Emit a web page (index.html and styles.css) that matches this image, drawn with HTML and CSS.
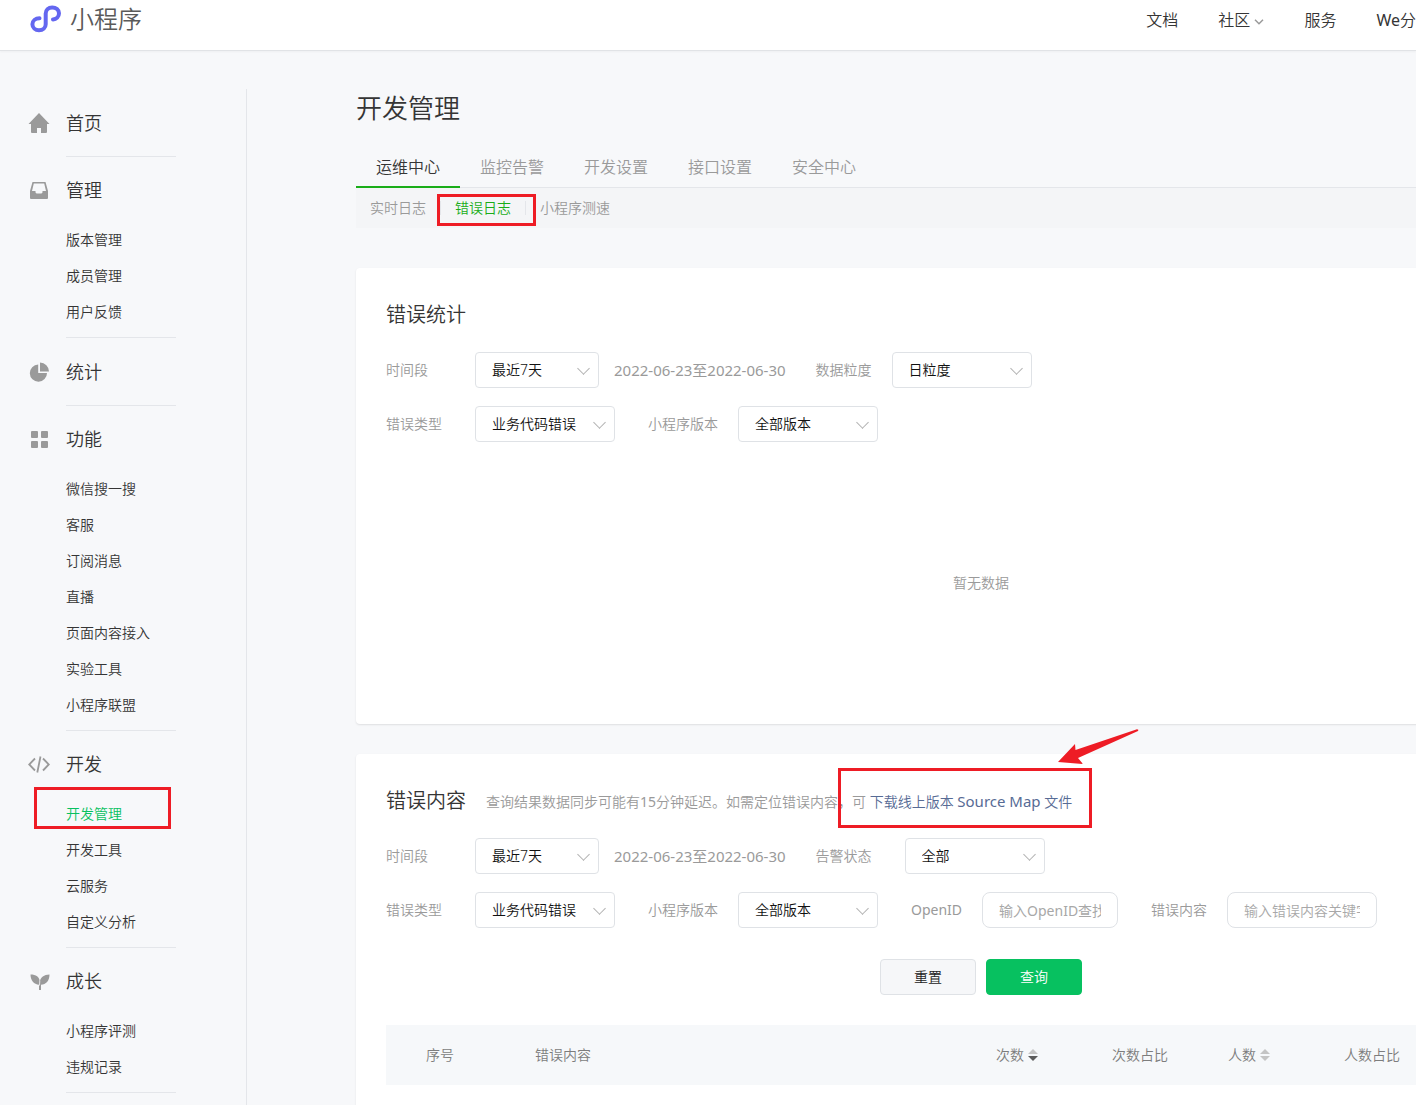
FILE: index.html
```html
<!DOCTYPE html>
<html lang="zh-CN">
<head>
<meta charset="utf-8">
<meta name="viewport" content="width=device-width, initial-scale=1">
<title>小程序</title>
<link rel="stylesheet" href="styles.css">
</head>
<body>
<header class="topbar">
  <a class="brand" href="#">
    <svg class="brand-mark" viewBox="0 0 32 30" width="32" height="30" aria-hidden="true"><path d="M9.500 14.200C5.500 14.200 2.400 16.800 2.400 20.300C2.400 23.700 5.300 26.200 9 26.200C13 26.200 15.700 23.700 15.700 20.300V9.500C15.700 6.100 18.400 3.400 22.200 3.400C26 3.400 29 6 29 9.300C29 12.700 26.300 15.200 23 15.400" fill="none" stroke="#6467f0" stroke-width="4" stroke-linecap="round"/></svg>
    <span class="brand-name">小程序</span>
  </a>
  <nav class="topnav">
    <a href="#">文档</a>
    <a href="#">社区<svg class="nav-arrow" viewBox="0 0 10 6" width="10" height="6" aria-hidden="true"><path d="M1 .8l4 4 4-4" fill="none" stroke="#9a9a9a" stroke-width="1.500"/></svg></a>
    <a href="#">服务</a>
    <a href="#"><span class="latin">We</span>分</a>
  </nav>
</header>

<div class="layout">
  <nav class="sidebar">
    <section class="menu-group">
      <a class="menu-title" href="#"><svg viewBox="0 0 22 22" width="22" height="22"><path d="M11 0l10.500 11H19v8a1 1 0 0 1-1 1h-5v-5H9v5H4a1 1 0 0 1-1-1v-8H.5z" fill="#9a9a9a"/></svg>首页</a>
    </section>
    <section class="menu-group has-items">
      <a class="menu-title" href="#"><svg viewBox="0 0 22 22" width="22" height="22"><path d="M4.500 2h13L20 11v7a1 1 0 0 1-1 1H3a1 1 0 0 1-1-1v-7zM5.800 3.500L4 11h3.500v1.500l1 1h5l1-1V11H18l-1.800-7.500z" fill="#9a9a9a" fill-rule="evenodd"/></svg>管理</a>
      <ul>
        <li><a href="#">版本管理</a></li>
        <li><a href="#">成员管理</a></li>
        <li><a href="#">用户反馈</a></li>
      </ul>
    </section>
    <section class="menu-group">
      <a class="menu-title" href="#"><svg viewBox="0 0 22 22" width="22" height="22"><path d="M10.200 2.500v8.500H19A8.600 8.600 0 1 1 10.200 2.500zM12 .5a9 9 0 0 1 9 9h-9z" fill="#9a9a9a"/></svg>统计</a>
    </section>
    <section class="menu-group has-items">
      <a class="menu-title" href="#"><svg viewBox="0 0 22 22" width="22" height="22"><g fill="#9a9a9a"><rect x="3" y="2" width="7" height="7" rx="1"/><rect x="13" y="2" width="7" height="7" rx="1"/><rect x="3" y="12" width="7" height="7" rx="1"/><rect x="13" y="12" width="7" height="7" rx="1"/></g></svg>功能</a>
      <ul>
        <li><a href="#">微信搜一搜</a></li>
        <li><a href="#">客服</a></li>
        <li><a href="#">订阅消息</a></li>
        <li><a href="#">直播</a></li>
        <li><a href="#">页面内容接入</a></li>
        <li><a href="#">实验工具</a></li>
        <li><a href="#">小程序联盟</a></li>
      </ul>
    </section>
    <section class="menu-group has-items">
      <a class="menu-title" href="#"><svg viewBox="0 0 22 22" width="22" height="22"><path d="M7 4.500L1.200 10.500 7 16.500M15 4.500l5.800 6-5.800 6M12.500 2.500l-3.200 16" fill="none" stroke="#9a9a9a" stroke-width="1.800"/></svg>开发</a>
      <ul>
        <li><a class="current" href="#">开发管理</a><span class="mark mark-menu"></span></li>
        <li><a href="#">开发工具</a></li>
        <li><a href="#">云服务</a></li>
        <li><a href="#">自定义分析</a></li>
      </ul>
    </section>
    <section class="menu-group has-items">
      <a class="menu-title" href="#"><svg viewBox="0 0 22 22" width="22" height="22"><path d="M2.500 3.500C8 3.500 11.500 6 11.800 10.500 12.500 6.500 16 3.500 21.500 3.500 21.500 10 18 13.500 13 13.800V19h-2v-5.300C6 13.300 2.500 9.500 2.500 3.500z" fill="#9a9a9a"/><path d="M11.800 9.500L11.500 14.500" stroke="#f7f8fa" stroke-width=".8"/></svg>成长</a>
      <ul>
        <li><a href="#">小程序评测</a></li>
        <li><a href="#">违规记录</a></li>
      </ul>
    </section>
  </nav>

  <main class="main">
    <div class="content">
      <h1>开发管理</h1>
      <nav class="tabs">
        <a class="active" href="#">运维中心</a>
        <a href="#">监控告警</a>
        <a href="#">开发设置</a>
        <a href="#">接口设置</a>
        <a href="#">安全中心</a>
      </nav>
      <nav class="subtabs">
        <a href="#">实时日志</a>
        <a class="active" href="#">错误日志<span class="mark mark-tab"></span></a>
        <a href="#">小程序测速</a>
      </nav>

      <section class="card stats">
        <div class="card-head"><h2>错误统计</h2></div>
        <div class="filters">
          <label class="lead" for="s-range">时间段</label>
          <span class="select short"><select id="s-range"><option>最近7天</option></select></span>
          <span class="dates">2022-06-23至2022-06-30</span>
          <label for="s-grain">数据粒度</label>
          <span class="select"><select id="s-grain"><option>日粒度</option></select></span>
        </div>
        <div class="filters">
          <label class="lead" for="s-type">错误类型</label>
          <span class="select"><select id="s-type"><option>业务代码错误</option></select></span>
          <label for="s-version">小程序版本</label>
          <span class="select"><select id="s-version"><option>全部版本</option></select></span>
        </div>
        <p class="empty">暂无数据</p>
      </section>

      <section class="card errors">
        <div class="card-head">
          <h2>错误内容</h2>
          <p class="hint">查询结果数据同步可能有<span class="latin">15</span>分钟延迟。如需定位错误内容，可 <a class="download" href="#">下载线上版本 <span class="latin">Source Map</span> 文件<span class="mark mark-link"></span><svg class="pointer" viewBox="0 0 82 38" width="82" height="38" aria-hidden="true"><path d="M1 34L18 16 18.500 22 80 1.200Q82 1.200 81 3L21 30 26 36z" fill="#ee1c25"/></svg></a></p>
        </div>
        <div class="filters">
          <label class="lead" for="e-range">时间段</label>
          <span class="select short"><select id="e-range"><option>最近7天</option></select></span>
          <span class="dates">2022-06-23至2022-06-30</span>
          <label class="status" for="e-status">告警状态</label>
          <span class="select"><select id="e-status"><option>全部</option></select></span>
        </div>
        <div class="filters">
          <label class="lead" for="e-type">错误类型</label>
          <span class="select"><select id="e-type"><option>业务代码错误</option></select></span>
          <label for="e-version">小程序版本</label>
          <span class="select"><select id="e-version"><option>全部版本</option></select></span>
          <label class="latin" for="e-openid">OpenID</label>
          <input id="e-openid" class="field latin" type="text" placeholder="输入OpenID查找">
          <label for="e-text">错误内容</label>
          <input id="e-text" class="field wide" type="text" placeholder="输入错误内容关键字">
        </div>
        <div class="actions">
          <button class="btn" type="button">重置</button>
          <button class="btn primary" type="button">查询</button>
        </div>
        <table>
          <colgroup><col class="c-index"><col class="c-text"><col class="c-num"><col class="c-num"><col class="c-num"><col></colgroup>
          <thead>
            <tr>
              <th>序号</th>
              <th>错误内容</th>
              <th>次数<svg class="sort" viewBox="0 0 10 12" width="10" height="12" aria-hidden="true"><path d="M0 5l5-5 5 5z" fill="#c4c4c4"/><path d="M0 7l5 5 5-5z" fill="#5c5c5c"/></svg></th>
              <th>次数占比</th>
              <th>人数<svg class="sort" viewBox="0 0 10 12" width="10" height="12" aria-hidden="true"><path d="M0 5l5-5 5 5z" fill="#c4c4c4"/><path d="M0 7l5 5 5-5z" fill="#c4c4c4"/></svg></th>
              <th>人数占比</th>
            </tr>
          </thead>
        </table>
      </section>
    </div>
  </main>
</div>
</body>
</html>
```
FILE: styles.css
```css
* { box-sizing: border-box; }

body {
  margin: 0;
  min-height: 100vh;
  display: flex;
  flex-direction: column;
  background: #f7f8fa;
  color: #353535;
  font: 350 14px/20px "Noto Sans", "Noto Sans CJK SC", sans-serif;
  overflow-x: hidden;
}

h1, h2, p, ul { margin: 0; padding: 0; font-weight: inherit; }
ul { list-style: none; }
a { color: inherit; text-decoration: none; }
svg { flex: none; }

/* Top bar */
.topbar {
  display: flex;
  justify-content: space-between;
  height: 51px;
  padding: 0 0 12px 30px;
  background: #fff;
  border-bottom: 1px solid #e1e3e6;
  box-shadow: 0 1px 2px rgba(0, 0, 0, .04);
}
.brand { display: flex; align-items: center; gap: 8px; color: #5a5a5a; font-size: 24px; line-height: 38px; }
.topnav { display: flex; gap: 40px; font-size: 16px; line-height: 40px; white-space: nowrap; }
.nav-arrow { margin: 0 0 1px 4px; }

/* Page frame */
.layout { flex: 1; display: flex; padding-top: 38px; }

.sidebar { flex: none; width: 247px; padding: 0 70px 0 28px; border-right: 1px solid #e4e6ea; }
.menu-group { position: relative; padding: 18px 0 17px; }
.menu-group::after {
  content: "";
  position: absolute;
  left: 38px;
  right: 0;
  bottom: 0;
  border-bottom: 1px solid #e4e6ea;
}
.menu-group.has-items { padding: 17px 0 8px; }
.menu-title { display: flex; align-items: center; gap: 16px; font-size: 18px; line-height: 33px; }
.menu-group ul { margin-top: 15px; padding-left: 38px; }
.menu-group li { position: relative; line-height: 36px; }
.menu-group .current { color: #07c160; }

.main { flex: 1; min-width: 0; padding-left: 109px; overflow: hidden; display: flex; }
.content { flex: 1; min-width: 1250px; display: flex; flex-direction: column; }

h1 { font-size: 26px; line-height: 38px; margin-bottom: 20px; }

.tabs { display: flex; border-bottom: 1px solid #e4e6ea; font-size: 16px; line-height: 40px; color: #9a9a9a; }
.tabs a { padding: 0 20px; height: 41px; margin-bottom: -1px; }
.tabs .active { color: #353535; border-bottom: 2px solid #1aad19; }

.subtabs { display: flex; align-items: center; height: 40px; background: #f4f5f7; color: #9a9a9a; }
.subtabs a { position: relative; padding: 0 14px; line-height: 14px; }
.subtabs a + a { border-left: 1px solid #e4e6ea; }
.subtabs .active { color: #1aad19; }

/* Cards */
.card { background: #fff; border-radius: 4px; padding: 30px; box-shadow: 0 1px 2px rgba(0, 0, 0, .1); }
.stats { margin-top: 40px; padding-bottom: 131px; }
.errors { flex: 1; margin-top: 30px; padding-bottom: 20px; border-radius: 4px 4px 0 0; }
.card-head { display: flex; align-items: center; gap: 20px; height: 34px; margin: 0 0 20px; }
h2 { font-size: 20px; line-height: 32px; }
.hint { color: #9a9a9a; }
.download { position: relative; color: #576b95; }

.latin, .dates { font-weight: 400; }

.filters { display: flex; align-items: center; height: 36px; margin-bottom: 18px; color: #9a9a9a; white-space: nowrap; }
.filters label { margin: 0 20px 0 33px; }
.filters .lead { width: 69px; margin-left: 0; }
.filters .dates + label { margin-left: 30px; }
.filters .status { margin-right: 33px; }
.dates { margin-left: 15px; }
.dates, .download .latin { font-size: 15px; }

.select { position: relative; width: 140px; }
.select.short { width: 124px; }
.select::after {
  content: "";
  position: absolute;
  right: 11px;
  top: 12px;
  width: 8px;
  height: 8px;
  border: solid #b2b2b2;
  border-width: 0 1px 1px 0;
  transform: rotate(45deg);
  pointer-events: none;
}
select, .btn { font: inherit; }
.field { font-family: inherit; font-size: inherit; }
select, .field, .btn { height: 36px; border: 1px solid #dfe2e6; border-radius: 4px; }
select { display: block; width: 100%; padding: 0 16px; appearance: none; background: #fff; color: #111; }
.field { width: 136px; padding: 0 16px; border-radius: 8px; background: #fff; }
.field.wide { width: 150px; font-weight: inherit; }
.field::placeholder { color: #a8a8a8; }

.empty { margin-top: 131px; text-align: center; color: #9a9a9a; }

.actions { display: flex; justify-content: center; gap: 10px; margin: 31px 0 30px; }
.btn { width: 96px; background: #f6f7f9; color: #222; }
.btn.primary { background: #07c160; border-color: #07c160; color: #fff; }

table { width: 100%; table-layout: fixed; border-collapse: collapse; background: #f6f8fa; }
th { height: 60px; padding: 0 0 0 40px; text-align: left; font-weight: inherit; color: #7d7d7d; white-space: nowrap; }
.c-index { width: 109px; }
.c-text { width: 461px; }
.c-num { width: 116px; }
.sort { margin-left: 4px; vertical-align: -1px; }

/* Red call-outs drawn over the page */
.mark { position: absolute; border: 3px solid #ee1c25; pointer-events: none; }
.mark-menu { left: -32px; top: -9px; width: 137px; height: 42px; }
.mark-tab { left: -4px; top: -7px; width: 99px; height: 32px; z-index: 1; }
.mark-link { left: -32px; right: -20px; top: -24px; height: 60px; }
.pointer { position: absolute; right: -67px; top: -64px; }
```
